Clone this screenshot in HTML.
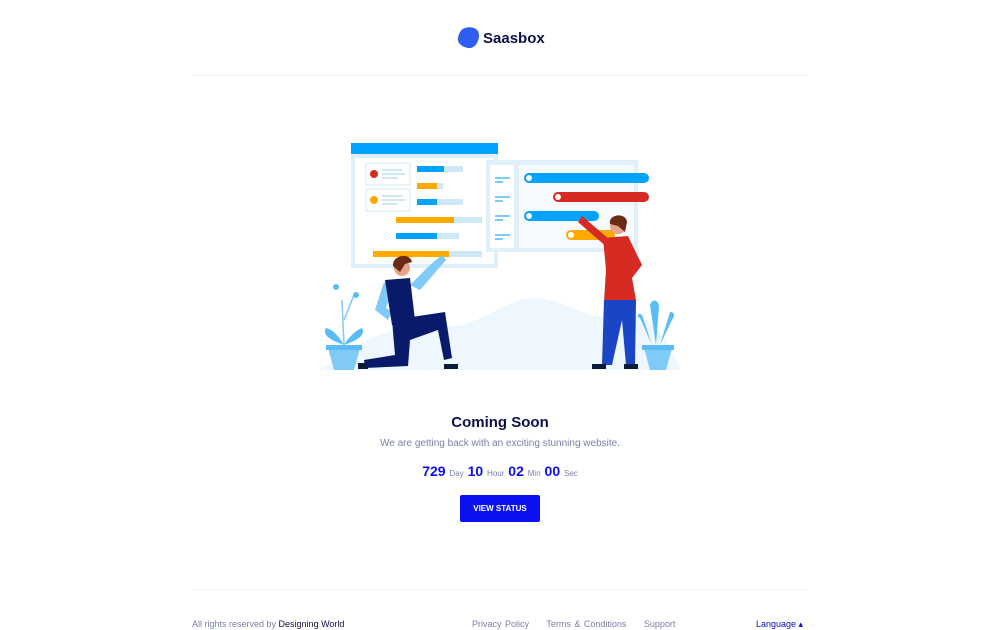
<!DOCTYPE html>
<html><head><meta charset="utf-8"><style>
body{margin:0;width:1000px;height:625px;overflow:hidden;background:#fff;font-family:"Liberation Sans",sans-serif;position:relative}
.abs{position:absolute}
.hr{position:absolute;left:192px;width:616px;height:1px;background:#f0f0f4}
</style></head><body>
<div class="abs" style="left:457px;top:27px;width:90px;height:24px">
<svg width="24" height="22" style="position:absolute;left:0;top:0px" viewBox="0 0 24 22"><path d="M8 1 C14 -1 22 1 22 8 C22 16 17 22 11 21 C5 20 0 16 1 11 C2 6 4 2 8 1Z" fill="#2e5ff0"/></svg>
<div class="abs" style="left:26px;top:3px;font-weight:bold;font-size:15px;color:#0d0f4a">Saasbox</div>
</div>
<div class="hr" style="top:75px"></div>

<svg class="abs" style="left:320px;top:140px" width="360" height="235" viewBox="0 0 360 235">
<path d="M0 230 C40 200 80 180 120 185 C150 190 160 175 200 160 C240 150 260 185 300 175 C330 170 350 200 360 230Z" fill="#eef7fd"/>
<rect x="31" y="3" width="147" height="125" fill="#dff0fb"/>
<rect x="31" y="3" width="147" height="11" fill="#00a2ff"/>
<rect x="35" y="18" width="139" height="106" fill="#fff"/>
<rect x="46" y="23" width="44" height="22" fill="#fff" stroke="#cfe8f8"/>
<rect x="46" y="49" width="44" height="22" fill="#fff" stroke="#cfe8f8"/>
<circle cx="54" cy="34" r="4" fill="#d62a22"/><circle cx="54" cy="60" r="4" fill="#ffa800"/>
<g fill="#cfe8f8"><rect x="62" y="29" width="20" height="2"/><rect x="62" y="33" width="23" height="2"/><rect x="62" y="37" width="16" height="2"/><rect x="62" y="55" width="20" height="2"/><rect x="62" y="59" width="23" height="2"/><rect x="62" y="63" width="16" height="2"/>
<rect x="97" y="26" width="46" height="6"/><rect x="97" y="43" width="26" height="6"/><rect x="97" y="59" width="46" height="6"/><rect x="76" y="77" width="86" height="6"/><rect x="76" y="93" width="63" height="6"/><rect x="53" y="111" width="109" height="6"/></g>
<rect x="97" y="26" width="27" height="6" fill="#00a2ff"/><rect x="97" y="43" width="20" height="6" fill="#ffa800"/><rect x="97" y="59" width="20" height="6" fill="#00a2ff"/><rect x="76" y="77" width="58" height="6" fill="#ffa800"/><rect x="76" y="93" width="41" height="6" fill="#00a2ff"/><rect x="53" y="111" width="76" height="6" fill="#ffa800"/>
<rect x="166" y="20" width="152" height="92" fill="#dff0fb"/>
<rect x="170" y="25" width="24" height="83" fill="#fff"/>
<rect x="199" y="25" width="115" height="83" fill="#f7fbfe"/>
<g fill="#7fcaf7"><rect x="175" y="37" width="15" height="2"/><rect x="175" y="41" width="8" height="2"/><rect x="175" y="56" width="15" height="2"/><rect x="175" y="60" width="8" height="2"/><rect x="175" y="75" width="15" height="2"/><rect x="175" y="79" width="8" height="2"/><rect x="175" y="94" width="15" height="2"/><rect x="175" y="98" width="8" height="2"/></g>
<rect x="204" y="33" width="125" height="10" rx="5" fill="#00a2ff"/><circle cx="209" cy="38" r="3" fill="#fff"/>
<rect x="233" y="52" width="96" height="10" rx="5" fill="#d62a22"/><circle cx="238" cy="57" r="3" fill="#fff"/>
<rect x="204" y="71" width="75" height="10" rx="5" fill="#00a2ff"/><circle cx="209" cy="76" r="3" fill="#fff"/>
<rect x="246" y="90" width="49" height="10" rx="5" fill="#ffa800"/><circle cx="251" cy="95" r="3" fill="#fff"/>
<path d="M110 125 L122 115 L126 120 L100 150 L90 145Z" fill="#7fcaf7"/>
<path d="M64 142 L55 170 L68 180 L72 172 L66 168 L72 150Z" fill="#7fcaf7"/>
<path d="M65 140 L90 138 L95 180 L72 185Z" fill="#0a1a6b"/>
<path d="M72 180 L125 172 L132 218 L124 220 L118 190 L90 200 L88 226 L45 228 L44 220 L75 215Z" fill="#0a1a6b"/>
<circle cx="82" cy="128" r="8" fill="#e8a48a"/><path d="M73 126 C72 115 90 112 92 122 L85 124 L80 132Z" fill="#6b2a12"/>
<path d="M262 76 L290 100 L288 108 L258 82Z" fill="#d62a22"/>
<path d="M283 98 L308 96 L322 125 L312 138 L316 160 L284 162 L286 130Z" fill="#d62a22"/>
<path d="M284 160 L316 160 L315 225 L306 225 L302 180 L292 225 L282 225Z" fill="#1a45c4"/>
<circle cx="298" cy="86" r="8" fill="#e8a48a"/><path d="M290 84 C288 74 306 72 307 82 L305 92 L298 86Z" fill="#6b2a12"/>
<rect x="272" y="224" width="14" height="5" fill="#0a1a3b"/><rect x="304" y="224" width="14" height="5" fill="#0a1a3b"/>
<rect x="38" y="223" width="10" height="6" fill="#0a1a3b"/><rect x="124" y="224" width="14" height="5" fill="#0a1a3b"/>
<path d="M8 208 L40 208 L34 230 L14 230Z" fill="#7fcaf7"/><rect x="6" y="205" width="36" height="5" fill="#5bbcf5"/>
<path d="M24 205 C10 200 2 195 6 188 C14 190 20 198 24 205 C28 198 36 190 42 188 C46 195 38 200 24 205Z" fill="#5bbcf5"/>
<path d="M24 205 L22 160 M24 180 L34 155" stroke="#7fcaf7" stroke-width="1.5" fill="none"/><circle cx="16" cy="147" r="3" fill="#5bbcf5"/><circle cx="36" cy="155" r="3" fill="#5bbcf5"/>
<path d="M324 208 L352 208 L346 230 L330 230Z" fill="#7fcaf7"/><rect x="322" y="205" width="32" height="5" fill="#5bbcf5"/>
<path d="M336 205 L330 165 C333 158 338 160 339 166Z M340 205 L350 172 C355 172 355 176 352 180Z M332 205 L320 178 C316 176 318 172 322 175Z" fill="#5bbcf5"/>
</svg>

<div class="abs" style="left:0;width:1000px;top:414px;text-align:center;font-weight:bold;font-size:15px;color:#0d0f4a">Coming Soon</div>
<div class="abs" style="left:0;width:1000px;top:438px;text-align:center;font-size:10px;color:#7a7fa8">We are getting back with an exciting stunning website.</div>
<div class="abs" style="left:0;width:1000px;top:463px;text-align:center;color:#0a10f0;font-size:14px;font-weight:bold">729 <span style="font-size:8px;font-weight:normal;color:#7a7fa8">Day</span> 10 <span style="font-size:8px;font-weight:normal;color:#7a7fa8">Hour</span> 02 <span style="font-size:8px;font-weight:normal;color:#7a7fa8">Min</span> 00 <span style="font-size:8px;font-weight:normal;color:#7a7fa8">Sec</span></div>
<div class="abs" style="left:460px;top:495px;width:80px;height:27px;background:#0a10f0;border-radius:2px;color:#fff;font-size:8px;font-weight:bold;text-align:center;line-height:27px">VIEW STATUS</div>
<div class="hr" style="top:589px"></div>
<div class="abs" style="left:192px;top:619px;font-size:9px;color:#7a7fa8">All rights reserved by <span style="color:#0d0f4a">Designing World</span></div>
<div class="abs" style="left:472px;top:619px;font-size:9px;color:#7a7fa8;word-spacing:1px">Privacy Policy &nbsp;&nbsp;&nbsp; Terms &amp; Conditions &nbsp;&nbsp;&nbsp; Support</div>
<div class="abs" style="left:756px;top:619px;font-size:9px;color:#0a10c0">Language ▴</div>
</body></html>
